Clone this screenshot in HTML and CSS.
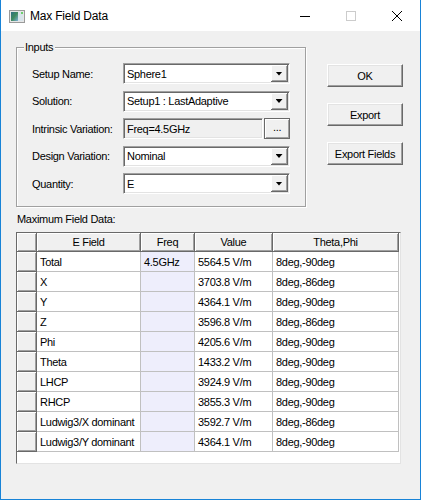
FILE: index.html
```html
<!DOCTYPE html>
<html>
<head>
<meta charset="utf-8">
<title>Max Field Data</title>
<link rel="stylesheet" href="styles.css">
</head>
<body>
<div class="window">
    <div class="titlebar">
        <svg class="app-icon" width="16" height="13" viewBox="0 0 16 13">
            <defs>
                <linearGradient id="g1" x1="0" y1="0" x2="1" y2="1">
                    <stop offset="0" stop-color="#2f6f86"/>
                    <stop offset="0.5" stop-color="#3f8a5e"/>
                    <stop offset="1" stop-color="#7fb0d8"/>
                </linearGradient>
            </defs>
            <rect x="0.5" y="0.5" width="15" height="12" fill="#e6e6e6" stroke="#9a9a9a"/>
            <rect x="2" y="2" width="7" height="9" fill="url(#g1)"/>
            <rect x="9" y="2" width="5" height="9" fill="#d8e4ea"/>
            <rect x="12" y="2" width="2" height="2" fill="#6ccf6c"/>
        </svg>
        <span class="title">Max Field Data</span>
        <div class="controls">
            <div class="ctl">
                <svg width="10" height="10" viewBox="0 0 10 10"><line x1="0" y1="5.5" x2="10" y2="5.5" stroke="#000"/></svg>
            </div>
            <div class="ctl">
                <svg width="10" height="10" viewBox="0 0 10 10"><rect x="0.5" y="0.5" width="9" height="9" fill="none" stroke="#cccccc"/></svg>
            </div>
            <div class="ctl">
                <svg width="10" height="10" viewBox="0 0 10 10"><path d="M0 0 L10 10 M10 0 L0 10" stroke="#000" stroke-width="1"/></svg>
            </div>
        </div>
    </div>

    <div class="content">
        <div class="top">
            <div class="group">
                <span class="legend">Inputs</span>
                <div class="row">
                    <span class="lbl">Setup Name:</span>
                    <div class="combo"><span class="val">Sphere1</span><span class="drop"></span></div>
                </div>
                <div class="row">
                    <span class="lbl">Solution:</span>
                    <div class="combo"><span class="val">Setup1 : LastAdaptive</span><span class="drop"></span></div>
                </div>
                <div class="row">
                    <span class="lbl">Intrinsic Variation:</span>
                    <div class="field"><span class="val">Freq=4.5GHz</span></div>
                    <div class="dots">...</div>
                </div>
                <div class="row">
                    <span class="lbl">Design Variation:</span>
                    <div class="combo"><span class="val">Nominal</span><span class="drop"></span></div>
                </div>
                <div class="row">
                    <span class="lbl">Quantity:</span>
                    <div class="combo"><span class="val">E</span><span class="drop"></span></div>
                </div>
            </div>

            <div class="buttons">
                <div class="btn">OK</div>
                <div class="btn">Export</div>
                <div class="btn">Export Fields</div>
            </div>
        </div>

        <div class="caption">Maximum Field Data:</div>

        <div class="grid">
            <table>
                <tr>
                    <th class="c-rh"></th>
                    <th class="c-name">E Field</th>
                    <th class="c-freq">Freq</th>
                    <th class="c-val">Value</th>
                    <th class="c-ang">Theta,Phi</th>
                </tr>
                <tr><td class="rh"></td><td>Total</td><td class="freq">4.5GHz</td><td>5564.5 V/m</td><td>8deg,-90deg</td></tr>
                <tr><td class="rh"></td><td>X</td><td class="freq"></td><td>3703.8 V/m</td><td>8deg,-86deg</td></tr>
                <tr><td class="rh"></td><td>Y</td><td class="freq"></td><td>4364.1 V/m</td><td>8deg,-90deg</td></tr>
                <tr><td class="rh"></td><td>Z</td><td class="freq"></td><td>3596.8 V/m</td><td>8deg,-86deg</td></tr>
                <tr><td class="rh"></td><td>Phi</td><td class="freq"></td><td>4205.6 V/m</td><td>8deg,-90deg</td></tr>
                <tr><td class="rh"></td><td>Theta</td><td class="freq"></td><td>1433.2 V/m</td><td>8deg,-90deg</td></tr>
                <tr><td class="rh"></td><td>LHCP</td><td class="freq"></td><td>3924.9 V/m</td><td>8deg,-90deg</td></tr>
                <tr><td class="rh"></td><td>RHCP</td><td class="freq"></td><td>3855.3 V/m</td><td>8deg,-90deg</td></tr>
                <tr><td class="rh"></td><td>Ludwig3/X dominant</td><td class="freq"></td><td>3592.7 V/m</td><td>8deg,-86deg</td></tr>
                <tr><td class="rh"></td><td>Ludwig3/Y dominant</td><td class="freq"></td><td>4364.1 V/m</td><td>8deg,-90deg</td></tr>
            </table>
        </div>
    </div>
</div>
</body>
</html>
```

FILE: styles.css
```css
body {
    margin: 0;
    font-family: "Liberation Sans", Arial, sans-serif;
    font-size: 11px;
    letter-spacing: -0.3px;
    color: #000;
}

.window {
    width: 421px;
    height: 500px;
    box-sizing: border-box;
    border: 1px solid #1883d7;
    border-top: none;
    background: #f0f0f0;
}

/* title bar */
.titlebar {
    display: flex;
    align-items: center;
    height: 31px;
    background: #fff;
}
.app-icon {
    margin-left: 8px;
    margin-top: 1px;
}
.title {
    margin-left: 5px;
    font-size: 12px;
    letter-spacing: -0.2px;
}
.controls {
    display: flex;
    margin-left: auto;
    height: 31px;
}
.ctl {
    width: 46px;
    display: flex;
    align-items: center;
    justify-content: center;
}

/* inputs */
.content {
    padding-left: 15px;
}
.top {
    display: flex;
    align-items: flex-start;
    margin-top: 16px;
}
.group {
    position: relative;
    width: 290px;
    height: 160px;
    box-sizing: border-box;
    border: 1px solid #a0a0a0;
    box-shadow: inset 1px 1px 0 #fff, 1px 1px 0 #fff;
    padding: 15px 15px 0 15px;
}
.legend {
    position: absolute;
    top: -8px;
    left: 7px;
    padding: 0 2px 0 1px;
    background: #f0f0f0;
    line-height: 14px;
}
.row {
    display: flex;
    align-items: center;
    height: 21px;
}
.row + .row {
    margin-top: 6.5px;
}
.lbl {
    width: 91px;
    flex: none;
}
.combo, .field {
    display: flex;
    align-items: center;
    height: 21px;
    box-sizing: border-box;
    border: 1px solid;
    border-color: #a0a0a0 #fff #fff #a0a0a0;
    box-shadow: inset 1px 1px 0 #696969, inset -1px -1px 0 #e3e3e3;
    padding: 1px;
    background: #fff;
}
.combo {
    width: 167px;
}
.field {
    width: 141px;
    background: #f0f0f0;
}
.val {
    flex: 1;
    padding-left: 2px;
    white-space: nowrap;
    overflow: hidden;
}
.drop {
    width: 17px;
    height: 17px;
    box-sizing: border-box;
    flex: none;
    display: flex;
    align-items: center;
    justify-content: center;
    background: #f0f0f0;
    border-right: 1px solid #696969;
    border-bottom: 1px solid #696969;
    box-shadow: inset 1px 1px 0 #fff, inset -1px -1px 0 #a0a0a0;
}
.drop::after {
    content: "";
    width: 7px;
    height: 4px;
    margin-top: 1px;
    background: #000;
    clip-path: polygon(0 0, 100% 0, 50% 100%);
}
.dots {
    width: 26px;
    height: 21px;
    box-sizing: border-box;
    margin-left: 1px;
    display: flex;
    align-items: center;
    justify-content: center;
    background: #f0f0f0;
    border: 1px solid #696969;
    box-shadow: inset 1px 1px 0 #fff, inset -1px -1px 0 #a0a0a0;
    padding-bottom: 3px;
}

/* buttons on the right */
.buttons {
    display: flex;
    flex-direction: column;
    gap: 16px;
    margin-left: 21px;
    padding-top: 17px;
}
.btn {
    width: 76px;
    height: 23px;
    box-sizing: border-box;
    display: flex;
    align-items: center;
    justify-content: center;
    background: #f0f0f0;
    border: 1px solid;
    border-color: #fff #696969 #696969 #fff;
    box-shadow: inset -1px -1px 0 #a0a0a0, inset 1px 1px 0 #e3e3e3;
}

/* result grid */
.caption {
    margin-top: 5px;
    margin-left: 1px;
    line-height: 14px;
}
.grid {
    margin-top: 6px;
    width: 385px;
    height: 232px;
    box-sizing: border-box;
    border: 1px solid;
    border-color: #696969 #e3e3e3 #e3e3e3 #696969;
    background: #fff;
}
.grid table {
    table-layout: fixed;
    border-collapse: separate;
    border-spacing: 0;
    width: 382px;
}
.grid th, .grid td {
    box-sizing: border-box;
    padding: 0 0 0 3px;
    white-space: nowrap;
    overflow: hidden;
    text-align: left;
    font-weight: normal;
}
.grid th {
    height: 19px;
    text-align: center;
    padding: 0;
    background: #f0f0f0;
    border-right: 1px solid #696969;
    border-bottom: 1px solid #696969;
    box-shadow: inset 1px 1px 0 #fff, inset -1px -1px 0 #a0a0a0;
}
.grid td {
    height: 20px;
    border-right: 1px solid #c0c0c0;
    border-bottom: 1px solid #c0c0c0;
}
.grid td.rh {
    padding: 0;
    background: #f0f0f0;
    border-right: 1px solid #696969;
    border-bottom: 1px solid #696969;
    box-shadow: inset 1px 1px 0 #fff, inset -1px -1px 0 #a0a0a0;
}
.grid td.freq {
    background: #eeeefc;
}
.c-rh { width: 20px; }
.c-name { width: 104px; }
.c-freq { width: 54px; }
.c-val { width: 78px; }
.c-ang { width: 126px; }
```
